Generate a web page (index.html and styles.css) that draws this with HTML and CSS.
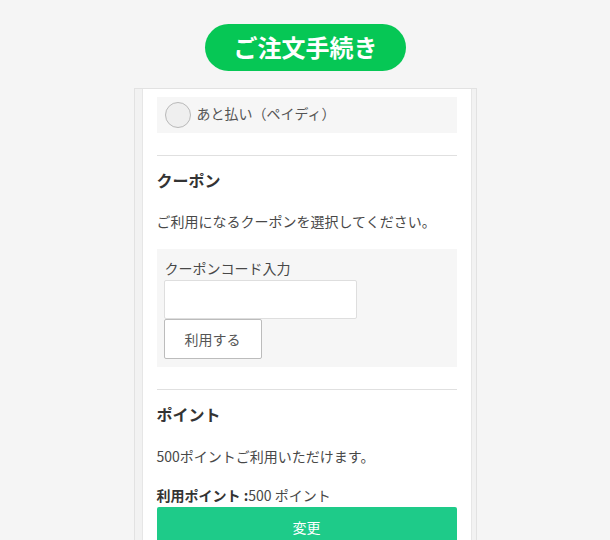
FILE: index.html
```html
<!DOCTYPE html>
<html lang="ja">
<head>
<meta charset="utf-8">
<title>ご注文手続き</title>
<link rel="stylesheet" href="styles.css">
</head>
<body>
<header class="header">
  <h1 class="title">ご注文手続き</h1>
</header>
<div class="frame">
  <main class="panel">
    <label class="pay-option">
      <span class="radio"></span>
      <span class="pay-label">あと払い（ペイディ）</span>
    </label>
    <hr class="divider">
    <section class="section">
      <h2 class="section-title">クーポン</h2>
      <p class="text">ご利用になるクーポンを選択してください。</p>
      <div class="coupon-box">
        <div class="coupon-label">クーポンコード入力</div>
        <input class="coupon-input" type="text">
        <button class="coupon-btn" type="button">利用する</button>
      </div>
    </section>
    <hr class="divider">
    <section class="section">
      <h2 class="section-title points-title">ポイント</h2>
      <p class="text">500ポイントご利用いただけます。</p>
      <p class="text use-points"><strong>利用ポイント :</strong>500 ポイント</p>
      <button class="change-btn" type="button">変更</button>
    </section>
  </main>
</div>
</body>
</html>
```
FILE: styles.css
```css
* { box-sizing: border-box; }
html, body { margin: 0; padding: 0; }
body {
  background: #f5f5f5;
  font-family: "Noto Sans CJK JP", "Noto Sans", sans-serif;
  color: #484848;
  font-size: 14px;
  overflow: hidden;
}
.header {
  display: flex;
  justify-content: center;
  padding-top: 24px;
}
.title {
  margin: 0;
  height: 47px;
  line-height: 46px;
  padding: 0 28px 0 29px;
  border-radius: 24px;
  background: #06c755;
  color: #fff;
  font-size: 24px;
  font-weight: 700;
}
.frame {
  width: 343px;
  margin: 17px auto 0;
  border: 1px solid #e2e2e2;
  border-bottom: none;
  background: #f2f2f2;
  padding: 0 4px 0 7px;
}
.panel {
  background: #fff;
  border-left: 1px solid #e6e6e6;
  border-right: 1px solid #e6e6e6;
  padding: 8px 14px 0;
  min-height: 460px;
}
.pay-option {
  display: flex;
  align-items: center;
  height: 36px;
  background: #f6f6f6;
  padding-left: 8px;
}
.radio {
  width: 26px;
  height: 26px;
  border-radius: 50%;
  border: 1px solid #b9b9b9;
  background: #efefef;
  flex: none;
}
.pay-label {
  margin-left: 6px;
  margin-bottom: 4px;
  color: #555;
  line-height: 20px;
}
.divider {
  margin: 22px 0 0;
  border: none;
  border-top: 1px solid #e0e0e0;
  height: 0;
}
.section-title {
  margin: 12px 0 0;
  font-size: 16px;
  line-height: 24px;
  font-weight: 700;
  color: #333;
}
.points-title { margin-top: 12px; }
.text {
  margin: 18px 0 0;
  line-height: 20px;
}
.section-title + .text { margin-top: 19px; }
.points-title + .text { margin-top: 20px; }
.use-points { margin-top: 19px; }
.coupon-box {
  margin-top: 18px;
  background: #f6f6f6;
  padding: 9px 7px 8px;
  display: flex;
  flex-direction: column;
  align-items: flex-start;
}
.coupon-label {
  line-height: 20px;
  margin-left: 1px;
  margin-bottom: 1px;
}
.coupon-input {
  margin: 1px 0 0;
  width: 193px;
  height: 39px;
  border: 1px solid #dedede;
  border-radius: 2px;
  background: #fff;
  padding: 0 8px;
  font: inherit;
}
.coupon-btn {
  margin: 0;
  width: 98px;
  height: 40px;
  border: 1px solid #bcbcbc;
  border-radius: 2px;
  background: #fff;
  color: #555;
  font: inherit;
  font-size: 14px;
}
.use-points strong { color: #333; }
.change-btn {
  display: block;
  margin-top: 2px;
  width: 100%;
  height: 40px;
  border: none;
  border-radius: 2px;
  background: #1ecb89;
  color: #fff;
  font: inherit;
  font-size: 14px;
}
```
